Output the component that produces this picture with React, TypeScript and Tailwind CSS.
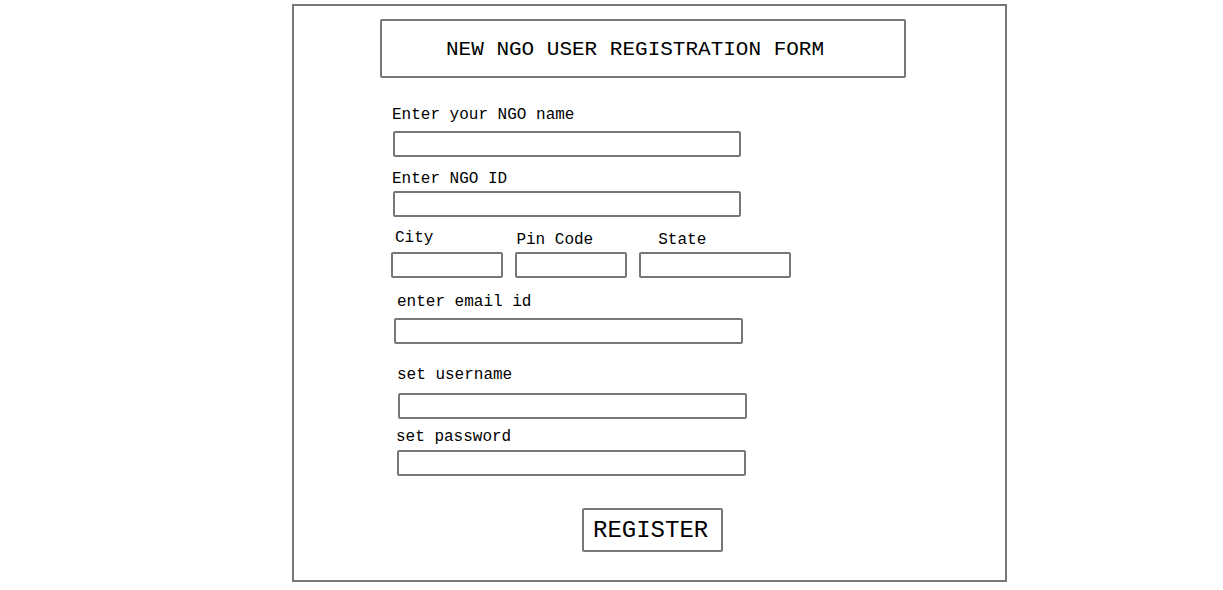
const mono = "font-['Liberation_Mono',monospace] text-black";

const Label = ({ text, className }: { text: string; className: string }) => (
  <div className={`${mono} text-[16px] leading-[20px] h-[20px] ${className}`}>{text}</div>
);

const Field = ({ className }: { className: string }) => (
  <div className={`h-[26px] border-2 border-[#777] rounded-[2px] bg-white ${className}`} />
);

export default function App() {
  return (
    <div className="min-h-[590px] bg-white pt-[4px] pl-[292px]">
      <div className="w-[715px] h-[578px] border-2 border-[#777] flex flex-col">
        <div
          className={`${mono} ml-[86px] mt-[13px] w-[526px] h-[59px] border-2 border-[#777] rounded-[2px] flex items-center pl-[64px] pt-[3px] text-[21px]`}
        >
          NEW NGO USER REGISTRATION FORM
        </div>

        <Label text="Enter your NGO name" className="ml-[98px] mt-[27px]" />
        <Field className="ml-[99px] mt-[6px] w-[348px]" />

        <Label text="Enter NGO ID" className="ml-[98px] mt-[12px]" />
        <Field className="ml-[99px] mt-[2px] w-[348px]" />

        <div className="flex mt-[11px] h-[22px]">
          <Label text="City" className="ml-[101px]" />
          <Label text="Pin Code" className="ml-[83px] mt-[2px]" />
          <Label text="State" className="ml-[65px] mt-[2px]" />
        </div>
        <div className="flex gap-[12px] ml-[97px] mt-[2px]">
          <Field className="w-[112px]" />
          <Field className="w-[112px]" />
          <Field className="w-[152px]" />
        </div>

        <Label text="enter email id" className="ml-[103px] mt-[14px]" />
        <Field className="ml-[100px] mt-[6px] w-[349px]" />

        <Label text="set username" className="ml-[103px] mt-[21px]" />
        <Field className="ml-[104px] mt-[8px] w-[349px]" />

        <Label text="set password" className="ml-[102px] mt-[8px]" />
        <Field className="ml-[103px] mt-[3px] w-[349px]" />

        <button
          className={`${mono} ml-[288px] mt-[32px] w-[141px] h-[44px] border-2 border-[#777] rounded-[2px] flex items-center pl-[9px] pt-[2px] text-[24px]`}
        >
          REGISTER
        </button>
      </div>
    </div>
  );
}
